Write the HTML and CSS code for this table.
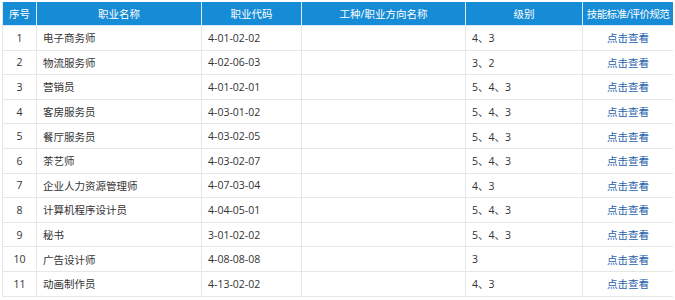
FILE: index.html
```html
<!DOCTYPE html>
<html lang="zh-CN">
<head>
    <meta charset="UTF-8">
    <meta name="viewport" content="width=device-width, initial-scale=1.0">
    <title>职业技能等级认定目录</title>
    <link rel="stylesheet" href="styles.css">
</head>
<body>
    <table class="job-table">
        <colgroup>
            <col class="c-no">
            <col class="c-name">
            <col class="c-code">
            <col class="c-dir">
            <col class="c-level">
            <col class="c-std">
        </colgroup>
        <thead>
            <tr>
                <th>序号</th>
                <th>职业名称</th>
                <th>职业代码</th>
                <th>工种/职业方向名称</th>
                <th>级别</th>
                <th class="tight">技能标准/评价规范</th>
            </tr>
        </thead>
        <tbody>
            <tr><td class="num">1</td><td>电子商务师</td><td>4-01-02-02</td><td></td><td>4、3</td><td class="link"><a href="#">点击查看</a></td></tr>
            <tr><td class="num">2</td><td>物流服务师</td><td>4-02-06-03</td><td></td><td>3、2</td><td class="link"><a href="#">点击查看</a></td></tr>
            <tr><td class="num">3</td><td>营销员</td><td>4-01-02-01</td><td></td><td>5、4、3</td><td class="link"><a href="#">点击查看</a></td></tr>
            <tr><td class="num">4</td><td>客房服务员</td><td>4-03-01-02</td><td></td><td>5、4、3</td><td class="link"><a href="#">点击查看</a></td></tr>
            <tr><td class="num">5</td><td>餐厅服务员</td><td>4-03-02-05</td><td></td><td>5、4、3</td><td class="link"><a href="#">点击查看</a></td></tr>
            <tr><td class="num">6</td><td>茶艺师</td><td>4-03-02-07</td><td></td><td>5、4、3</td><td class="link"><a href="#">点击查看</a></td></tr>
            <tr><td class="num">7</td><td>企业人力资源管理师</td><td>4-07-03-04</td><td></td><td>4、3</td><td class="link"><a href="#">点击查看</a></td></tr>
            <tr><td class="num">8</td><td>计算机程序设计员</td><td>4-04-05-01</td><td></td><td>5、4、3</td><td class="link"><a href="#">点击查看</a></td></tr>
            <tr><td class="num">9</td><td>秘书</td><td>3-01-02-02</td><td></td><td>5、4、3</td><td class="link"><a href="#">点击查看</a></td></tr>
            <tr><td class="num">10</td><td>广告设计师</td><td>4-08-08-08</td><td></td><td>3</td><td class="link"><a href="#">点击查看</a></td></tr>
            <tr><td class="num">11</td><td>动画制作员</td><td>4-13-02-02</td><td></td><td>4、3</td><td class="link"><a href="#">点击查看</a></td></tr>
        </tbody>
    </table>
</body>
</html>
```

FILE: styles.css
```css
body {
    margin: 2px;
    font-family: "Open Sans", "Noto Sans CJK SC", sans-serif;
    font-size: 10.5px;
    color: #333;
    background-color: white;
}
.job-table {
    width: 100%;
    border-collapse: collapse;
    table-layout: fixed;
}
.c-no { width: 34px; }
.c-name { width: 165px; }
.c-code { width: 100px; }
.c-dir { width: 164px; }
.c-level { width: 117px; }
.c-std { width: 91px; }
.job-table th,
.job-table td {
    border: 1px solid #e6e6e6;
    padding: 0 6px;
    white-space: nowrap;
    overflow: hidden;
}
.job-table th {
    background-color: #178cd6;
    color: white;
    font-weight: normal;
    text-align: center;
    height: 23px;
    padding: 0;
    border-color: #d9e9f5;
    border-top: none;
}
.job-table th.tight {
    letter-spacing: -0.6px;
}
.job-table td {
    height: 23.6px;
    text-align: left;
}
.job-table td.num,
.job-table td.link {
    text-align: center;
}
.job-table a {
    color: #1f62ab;
    text-decoration: none;
}
```
